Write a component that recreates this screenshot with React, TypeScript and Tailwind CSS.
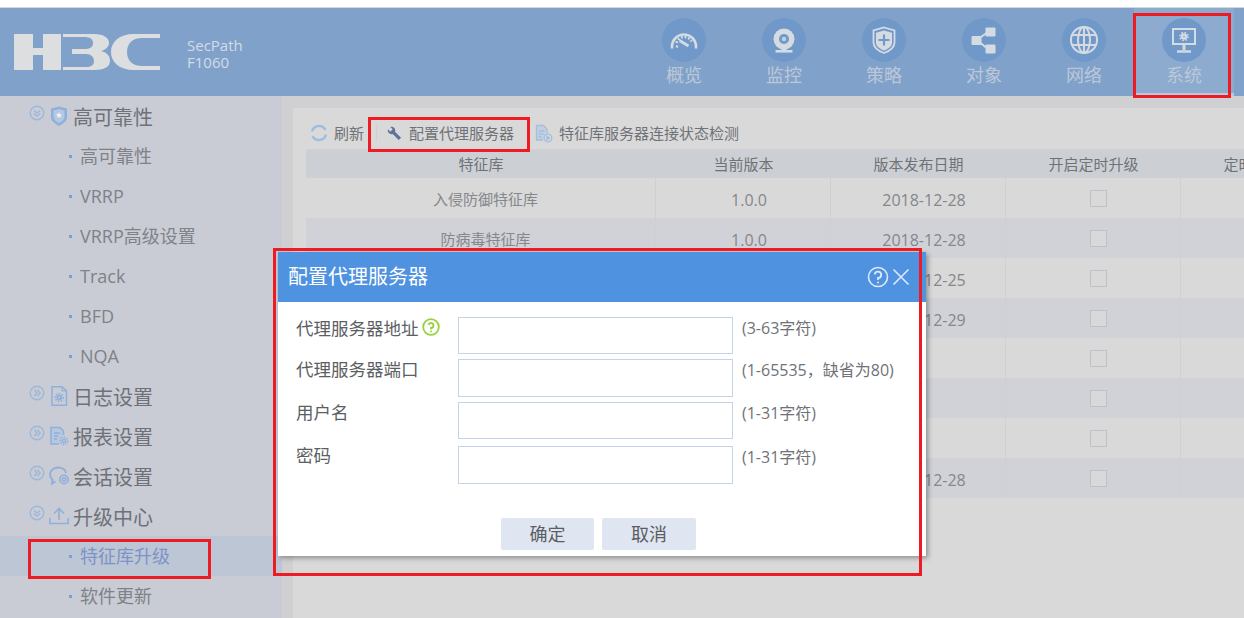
import React from "react";

const Red = ({ className }: { className: string }) => (
  <div className={`absolute border-[3px] border-[#ed1c24] pointer-events-none ${className}`} />
);

const navIcons: Record<string, React.ReactNode> = {
  概览: (
    <g fill="none" stroke="#d5dbe3">
      <path d="M2 22.500v-2a12 12 0 0 1 24 0v2" strokeWidth="2.600" />
      <path d="M6.500 17a8 8 0 0 1 15-1.500" strokeDasharray="1.800 1.800" strokeWidth="2.600" />
      <path d="M9.500 14.500l9 5.500" strokeWidth="2.800" />
      <path d="M6 20l2 1" strokeWidth="2" />
    </g>
  ),
  监控: (
    <g>
      <circle cx="14" cy="13" r="10.500" fill="#d5dbe3" />
      <circle cx="14" cy="13" r="5" fill="#7098c9" />
      <circle cx="14" cy="13" r="2.200" fill="#c3d0e0" />
      <path d="M11.500 22h5v3h-5z" fill="#d5dbe3" />
      <rect x="5.500" y="24" width="17" height="2.600" fill="#d5dbe3" />
    </g>
  ),
  策略: (
    <g fill="none" stroke="#d5dbe3">
      <path d="M14 1.500l10.500 3v12c0 5-5 8.500-10.500 10.500-5.500-2-10.500-5.500-10.500-10.500v-12z" strokeWidth="1.800" />
      <path d="M14 4.500l8 2.300v9.700c0 4-4 6.500-8 8-4-1.500-8-4-8-8v-9.700z" fill="#d5dbe3" stroke="none" />
      <path d="M14 8.500v11M8.500 14h11" stroke="#7098c9" strokeWidth="2.200" />
    </g>
  ),
  对象: (
    <g fill="#d5dbe3" stroke="#d5dbe3">
      <rect x="15.500" y="1.500" width="10" height="9" rx="1" stroke="none" />
      <rect x="1.500" y="10" width="10" height="9" rx="1" stroke="none" />
      <rect x="15.500" y="18.500" width="10" height="9" rx="1" stroke="none" />
      <path d="M8 13l10-7M8 15l10 8" strokeWidth="2" fill="none" />
    </g>
  ),
  网络: (
    <g fill="none" stroke="#d5dbe3" strokeWidth="2">
      <circle cx="14" cy="14" r="13" />
      <ellipse cx="14" cy="14" rx="6" ry="13" />
      <path d="M14 1v26M2.500 9h23M2.500 19h23" />
    </g>
  ),
  系统: (
    <g fill="none" stroke="#d5dbe3">
      <rect x="3" y="3" width="22" height="15" strokeWidth="2" />
      <path d="M14 18v6" strokeWidth="3" />
      <path d="M7 25.500h14" strokeWidth="2.400" />
      <circle cx="14" cy="10.500" r="2" strokeWidth="2.400" />
      <circle cx="14" cy="10.500" r="4" strokeWidth="1.600" strokeDasharray="1.600 1.540" />
    </g>
  ),
};

const nav = ["概览", "监控", "策略", "对象", "网络", "系统"];

const Toggle = ({ open }: { open: boolean }) => (
  <svg width="16" height="16" viewBox="0 0 16 16" fill="none" stroke="#9fb8da" className="shrink-0 mt-[-7px]">
    <circle cx="8" cy="8" r="6.800" strokeWidth="1.400" />
    {open ? (
      <path d="M4.800 5.500L8 8l3.200-2.500M4.800 8.500L8 11l3.200-2.500" strokeWidth="1.500" />
    ) : (
      <path d="M5.500 4.800L8 8l-2.500 3.200M8.500 4.800L11 8l-2.500 3.200" strokeWidth="1.500" />
    )}
  </svg>
);

const sideIcons: Record<string, React.ReactNode> = {
  shield: (
    <g transform="translate(2 0)">
      <path d="M8 0.500l8 2v9c0 3.500-4 6.500-8 8.500-4-2-8-5-8-8.500v-9z" fill="#8fb0db" />
      <path d="M8 3l5.500 1.500v6.500c0 2.500-2.800 4.500-5.500 6-2.700-1.500-5.500-3.500-5.500-6V4.500z" fill="#b6c8e0" />
      <path d="M8 6l.9 2.200 2.300.1-1.800 1.500.6 2.300L8 10.800l-2 1.300.6-2.300-1.800-1.500 2.300-.1z" fill="#f1f3f7" />
    </g>
  ),
  log: (
    <g fill="none" stroke="#8fb0db" strokeWidth="1.500" transform="translate(2 0)">
      <path d="M1 .8h10l4.500 4v14.500H1z" />
      <path d="M11 .8v4h4.500" strokeWidth="1.200" />
      <circle cx="8.200" cy="11.500" r="2" strokeWidth="1.800" />
      <circle cx="8.200" cy="11.500" r="4" strokeWidth="1.500" strokeDasharray="1.500 1.500" />
    </g>
  ),
  report: (
    <g fill="none" stroke="#8fb0db" strokeWidth="1.500" transform="translate(1 0)">
      <path d="M9 18H1V1.500h9l3.500 3.500V9" fill="#b6c8e0" />
      <path d="M4 7h6M4 10h4M4 13h3" />
      <circle cx="14" cy="15" r="1.600" strokeWidth="1.400" />
      <circle cx="14" cy="15" r="3.600" strokeWidth="1.600" strokeDasharray="1.500 1.200" />
    </g>
  ),
  session: (
    <g fill="none" stroke="#8fb0db" strokeWidth="2">
      <path d="M6.500 15.500l-3.500 2 .6-3.800A7 7 0 0 1 1 8.500C1 4.500 5 1.500 9 1.500s7.500 2 8 5.500" />
      <circle cx="15" cy="13.500" r="1.800" strokeWidth="1.600" />
      <circle cx="15" cy="13.500" r="4.300" strokeWidth="1.500" />
    </g>
  ),
  upgrade: (
    <g fill="none" stroke="#8fb0db" strokeWidth="1.600">
      <path d="M10 14V2.500M5 7.500l5-5 5 5" />
      <path d="M.8 12v5.500h18.400V12" />
    </g>
  ),
};

const Group = ({ icon, open, label }: { icon: string; open: boolean; label: string }) => (
  <div className="h-10 flex items-center pl-[29px] text-[20px] text-[#6e7177]">
    <Toggle open={open} />
    <svg width="20" height="20" viewBox="0 0 20 20" className="ml-[4px] shrink-0 overflow-visible">
      {sideIcons[icon]}
    </svg>
    <span className="ml-[4px] mt-[3px]">{label}</span>
  </div>
);

const Sub = ({ label, active }: { label: string; active?: boolean }) => (
  <div className={`h-10 flex items-center pl-[69px] text-[18px] ${active ? "bg-[#bcc6d4] text-[#7c92c8]" : "text-[#7f8287]"}`}>
    <span className="w-[3px] h-[3px] bg-[#7b9fcf] mr-2" />
    {label}
  </div>
);

const rows = [
  ["入侵防御特征库", "1.0.0", "2018-12-28"],
  ["防病毒特征库", "1.0.0", "2018-12-28"],
  ["", "", "2018-12-25"],
  ["", "", "2018-12-29"],
  ["", "", ""],
  ["", "", ""],
  ["", "", ""],
  ["", "", "2018-12-28"],
];

const fields = [
  { label: "代理服务器地址", hint: "(3-63字符)", help: true, box: "h-[37px]", row: "mb-[5px]", lead: "leading-[22px]" },
  { label: "代理服务器端口", hint: "(1-65535，缺省为80)", box: "h-[38px]", row: "mb-[5px]", lead: "leading-[21px]" },
  { label: "用户名", hint: "(1-31字符)", box: "h-[37px]", row: "mb-[7px]", lead: "leading-[20px]" },
  { label: "密码", hint: "(1-31字符)", box: "h-[38px]", row: "", lead: "leading-[18px]" },
];

export default function App() {
  return (
    <div className="relative w-[1244px] h-[618px] overflow-hidden bg-white font-['Open_Sans','Noto_Sans_CJK_SC',sans-serif]">
      <div className="h-[8px] bg-white border-b border-[#d5d6d8]" />
      <header className="h-[88px] bg-[#80a2ca] flex">
        <svg width="146" height="37" viewBox="0 0 146 37" className="ml-[14px] mt-[26px] shrink-0" fill="#dcdee0">
          <path d="M0 0h19v14h10V0h18v36H29V21H19v15H0z" />
          <path d="M49 0h31c10 0 15 4 15 9 0 4-4 7-8 8 5 1 9 4 9 10 0 6-6 9-16 9H49v-3h23c5 0 8-2 8-6s-3-7-8-7H58v-5h12c6 0 9-2 9-6s-3-6-9-6H49z" />
          <path d="M146 0h-26C105 0 97 8 97 18s8 18 23 18h26v-4h-18c-10 0-15-6-15-14s5-14 15-14h18z" />
        </svg>
        <div className="ml-[27px] mt-[29px] text-[15px] leading-[17px] text-[#d3dbe6] w-[100px]">
          <div>SecPath</div>
          <div>F1060</div>
        </div>
        <nav className="ml-auto mr-[10px] flex items-start">
          {nav.map((n) => (
            <div
              key={n}
              className={`w-[100px] h-[88px] flex flex-col items-center pt-[10px] ${n === "系统" ? "bg-[#8dabcf] border-b-[3px] border-[#b9c9dd]" : ""}`}
            >
              <div className="w-[44px] h-[44px] rounded-full bg-[#7098c9] flex items-center justify-center">
                <svg width="28" height="28" viewBox="0 0 28 28">
                  {navIcons[n]}
                </svg>
              </div>
              <span className="text-[18px] leading-[24px] mt-[1px] text-[#bcc8d8]">{n}</span>
            </div>
          ))}
        </nav>
      </header>

      <div className="flex h-[522px]">
        <aside className="w-[282px] shrink-0 bg-[#c9ccd5]">
          <Group icon="shield" open label="高可靠性" />
          <Sub label="高可靠性" />
          <Sub label="VRRP" />
          <Sub label="VRRP高级设置" />
          <Sub label="Track" />
          <Sub label="BFD" />
          <Sub label="NQA" />
          <Group icon="log" open={false} label="日志设置" />
          <Group icon="report" open={false} label="报表设置" />
          <Group icon="session" open={false} label="会话设置" />
          <Group icon="upgrade" open label="升级中心" />
          <Sub label="特征库升级" active />
          <Sub label="软件更新" />
        </aside>
        <main className="flex-1 min-w-0 bg-[#d0d0d2] pl-[11px] pt-[12px]">
          <div className="h-full bg-[#d9d9d9] pl-[13px] pt-[13px] overflow-hidden">
            <div className="h-[29px] pb-[4px] flex items-center text-[15px] text-[#6f7277] whitespace-nowrap border-b border-[#d0d0d2]">
              <svg width="18" height="18" viewBox="0 0 18 18" fill="none" stroke="#9fbde0" strokeWidth="2.500" className="ml-[4px]">
                <path d="M2 7.500A7.200 7.200 0 0 1 15.500 6M16 10.500A7.200 7.200 0 0 1 2.500 12" />
              </svg>
              <span className="ml-[6px]">刷新</span>
              <span className="w-px h-[16px] bg-[#d0d0d2] ml-[12px]" />
              <svg width="15" height="15" viewBox="0 0 16 16" fill="#5f719c" className="ml-[10px]">
                <path d="M1 3.500L3.500 6 6 3.500 3.500 1C5.800 0 8.500 1.500 8.800 4.200 8.900 5 8.800 5.500 8.500 6.100L15 12.500 12.500 15 6.100 8.500C3 9.500.2 6.800 1 3.500z" />
              </svg>
              <span className="ml-[7px]">配置代理服务器</span>
              <svg width="18" height="19" viewBox="0 0 18 19" fill="none" stroke="#a3bedf" strokeWidth="1.300" className="ml-[21px]">
                <path d="M8 16H1.500V1.500h7l3.500 3.500v4" fill="#c3d0e0" />
                <path d="M3.500 7h6M3.500 10h5M3.500 13h3" />
                <circle cx="13" cy="14" r="3.800" />
                <path d="M12 12.200l2.500 1.800-2.500 1.800z" fill="#a3bedf" />
              </svg>
              <span className="ml-[6px]">特征库服务器连接状态检测</span>
            </div>
            <div className="w-[1050px] text-[15px] text-center">
              <div className="grid grid-cols-[350px_175px_175px_175px_175px] h-[28px] items-center bg-[#ccd0d5] text-[#6f7277]">
                <div>特征库</div>
                <div>当前版本</div>
                <div>版本发布日期</div>
                <div>开启定时升级</div>
                <div className="whitespace-nowrap">定时升级时间</div>
              </div>
              {rows.map((r, i) => (
                <div
                  key={i}
                  className={`grid grid-cols-[350px_175px_175px_175px_175px] h-10 text-[#84878b] ${i % 2 ? "bg-[#d1d2d8]" : "bg-[#d9d9d9]"}`}
                >
                  <div className="flex items-center justify-center pl-[10px] pt-[2px] border-r border-[#d0d0d2]">{r[0]}</div>
                  <div className="flex items-center justify-center pl-[12px] pt-[3px] text-[16px] border-r border-[#d0d0d2]">{r[1]}</div>
                  <div className="flex items-center justify-center pl-[12px] pt-[3px] text-[16px] border-r border-[#d0d0d2]">{r[2]}</div>
                  <div className="flex items-center justify-center pl-[10px] border-r border-[#d0d0d2]">
                    <span className="w-[17px] h-[17px] border border-[#bfc1c4] bg-[#d9d9d9]" />
                  </div>
                  <div />
                </div>
              ))}
            </div>
          </div>
        </main>
      </div>

      <div className="absolute left-[278px] top-[252px] w-[648px] h-[304px] bg-white shadow-[2px_2px_5px_rgba(0,0,0,0.35)]">
        <div className="h-[50px] bg-[#4f92e0] flex items-center pl-[10px] pr-[16px] text-[20px] text-white">
          <span>配置代理服务器</span>
          <svg width="22" height="22" viewBox="0 0 22 22" fill="none" stroke="#dce9f8" strokeWidth="1.600" className="ml-auto">
            <circle cx="11" cy="11" r="9.500" />
            <path d="M7.800 8.500A3.200 3.200 0 1 1 11 12v2" strokeWidth="1.800" />
            <circle cx="11" cy="16.500" r="1" fill="#dce9f8" stroke="none" />
          </svg>
          <svg width="18" height="18" viewBox="0 0 18 18" fill="none" stroke="#dce9f8" strokeWidth="1.600" className="ml-[3px]">
            <path d="M1.500 1.500l15 15M16.500 1.500l-15 15" />
          </svg>
        </div>
        <div className="pt-[15px]">
          {fields.map((f) => (
            <div key={f.label} className={`flex items-start ${f.row}`}>
              <div className={`w-[180px] pl-[18px] text-[17.5px] text-[#5b5e63] flex items-center whitespace-nowrap ${f.lead}`}>
                {f.label}
                {f.help && (
                  <svg width="18" height="18" viewBox="0 0 18 18" fill="none" stroke="#9ad03f" strokeWidth="1.800" className="ml-[3px] mt-[-3px]">
                    <circle cx="9" cy="9" r="7.800" />
                    <path d="M6.500 7a2.500 2.500 0 1 1 2.500 3v1.500" strokeWidth="1.800" />
                    <circle cx="9" cy="13.500" r="1" fill="#9ad03f" stroke="none" />
                  </svg>
                )}
              </div>
              <div className={`w-[275px] border border-[#c4d3e6] bg-white ${f.box}`} />
              <div className="ml-[9px] text-[16px] leading-[22px] text-[#6f7277] whitespace-nowrap">{f.hint}</div>
            </div>
          ))}
        </div>
        <div className="flex pl-[223px] gap-2 mt-[34px]">
          <button className="w-[93px] h-[32px] rounded-[2px] bg-[#dfe5f1] text-[18px] text-[#5b5e63]">确定</button>
          <button className="w-[94px] h-[32px] rounded-[2px] bg-[#dfe5f1] text-[18px] text-[#5b5e63]">取消</button>
        </div>
      </div>

      <Red className="left-[1133px] top-[13px] w-[98px] h-[85px]" />
      <Red className="left-[368px] top-[117px] w-[162px] h-[35px]" />
      <Red className="left-[273px] top-[248px] w-[649px] h-[328px]" />
      <Red className="left-[28px] top-[539px] w-[183px] h-[40px]" />
    </div>
  );
}
